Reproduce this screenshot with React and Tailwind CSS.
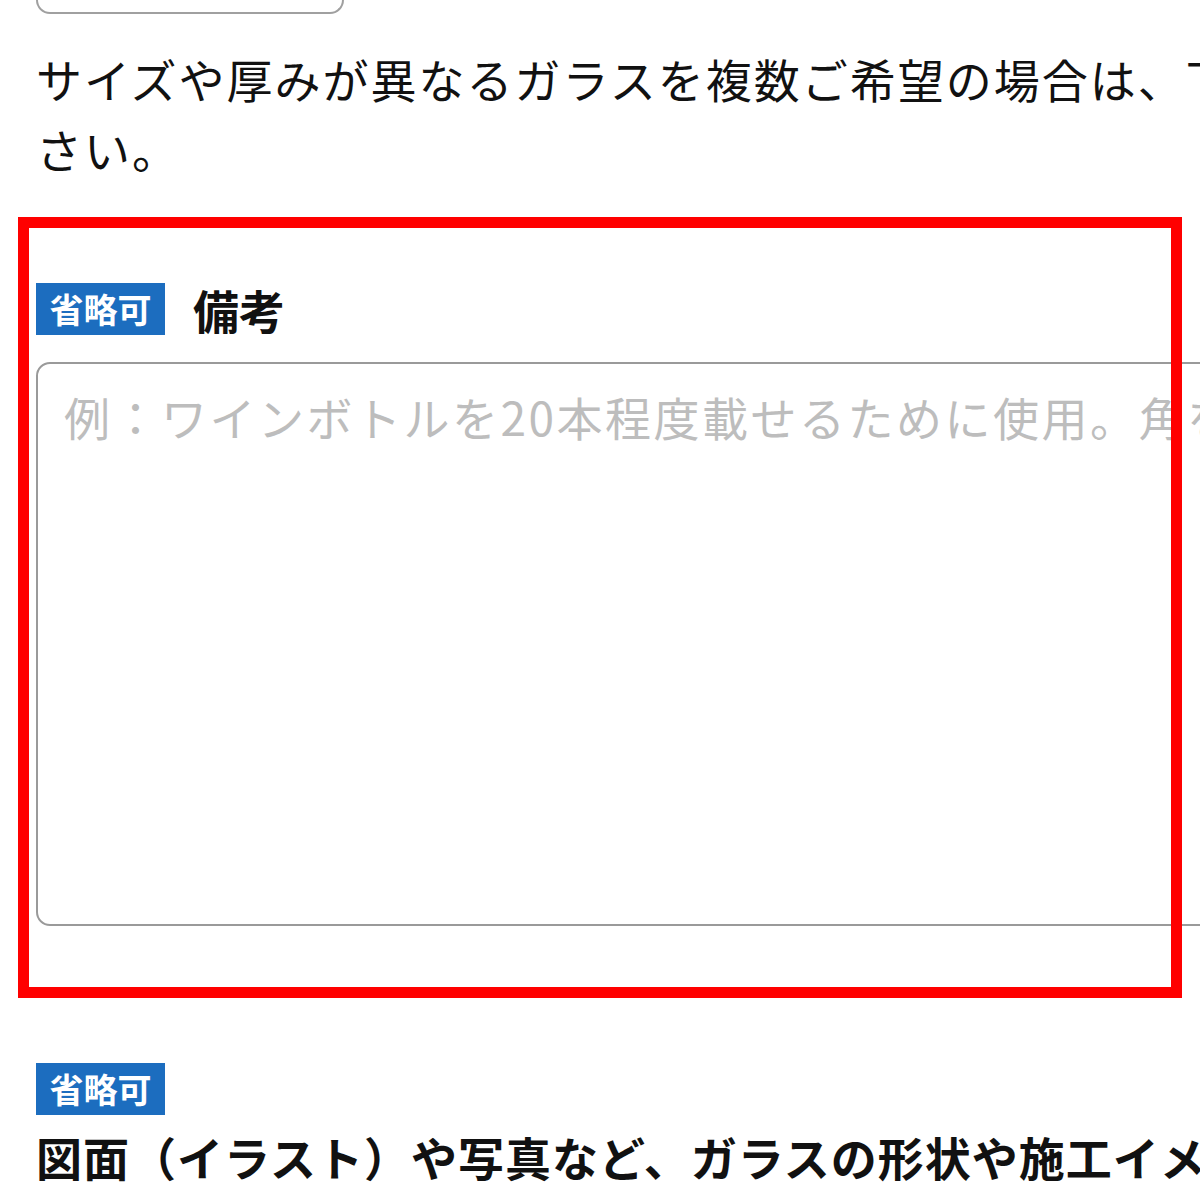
const jp = { fontFamily: '"Noto Sans CJK JP", "Noto Sans", sans-serif' };

const Badge = () => (
  <span className="inline-flex items-center justify-center w-[129px] h-[52px] bg-[#1c6dbf] text-white text-[34px] font-bold leading-none">
    省略可
  </span>
);

const App = () => {
  return (
    <div className="relative w-[1200px] h-[1200px] overflow-hidden bg-white" style={jp}>
      <div className="w-[2200px] pl-[36px] text-[#111]">
        {/* previous field (only its bottom edge is visible) */}
        <div className="w-[308px] h-[14px] border-2 border-t-0 border-[#a0a0a0] rounded-b-[16px]" />

        <p className="mt-[29px] text-[46px] leading-[70px] tracking-[2px] w-[1740px]">
          サイズや厚みが異なるガラスを複数ご希望の場合は、下記の備考欄にご記入ください。
        </p>

        <div className="mt-[100px] flex items-center gap-[28px]">
          <Badge />
          <h3 className="text-[46px] font-bold leading-none">備考</h3>
        </div>

        <textarea
          className="block mt-[27px] w-[2100px] h-[564px] border-2 border-[#9a9a9a] rounded-[14px] pl-[26px] pt-[18px] text-[46px] leading-[68px] tracking-[2.5px] resize-none outline-none placeholder:text-[#bdbdbd]"
          placeholder="例：ワインボトルを20本程度載せるために使用。角を丸く加工してほしい。"
        />

        <div className="mt-[137px]">
          <Badge />
        </div>
        <h3 className="mt-[13px] text-[46px] font-bold leading-[56px] tracking-[1px] whitespace-nowrap">
          図面（イラスト）や写真など、ガラスの形状や施工イメージがわかる資料があれば添付してください。
        </h3>
      </div>

      {/* highlight frame drawn over the remark field */}
      <div className="absolute left-[18px] top-[217px] w-[1164px] h-[781px] border-[11px] border-[#ff0000] pointer-events-none" />
    </div>
  );
};

export default App;
